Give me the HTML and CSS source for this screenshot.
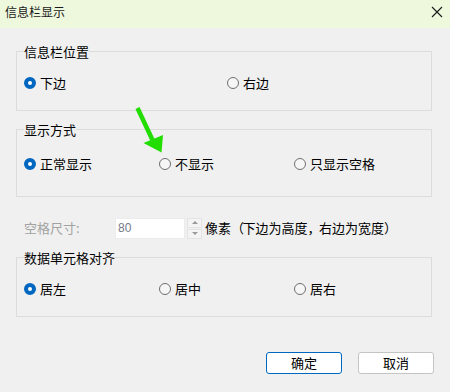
FILE: index.html
```html
<!DOCTYPE html>
<html lang="zh-CN">

<head>
  <meta charset="UTF-8">
  <title>信息栏显示</title>
  <link rel="stylesheet" href="styles.css">
</head>

<body>
  <div class="dialog">
    <div class="titlebar">
      <span class="title">信息栏显示</span>
      <svg class="close" width="12" height="12" viewBox="0 0 12 12">
        <path d="M1 1 L11 11 M11 1 L1 11" stroke="#1a1a1a" stroke-width="1.1" fill="none"/>
      </svg>
    </div>

    <div class="content">
      <!-- 信息栏位置 -->
      <div class="group group-pos">
        <div class="group-title">信息栏位置</div>
        <div class="options wide">
          <label class="radio"><span class="dot checked"></span>下边</label>
          <label class="radio"><span class="dot"></span>右边</label>
        </div>
      </div>

      <!-- 显示方式 -->
      <div class="group group-mode">
        <div class="group-title">显示方式</div>
        <div class="options">
          <label class="radio"><span class="dot checked"></span>正常显示</label>
          <label class="radio"><span class="dot"></span>不显示</label>
          <label class="radio"><span class="dot"></span>只显示空格</label>
        </div>
      </div>

      <div class="size-row">
        <span class="size-label">空格尺寸:</span>
        <div class="spin-input">80</div>
        <div class="spin-buttons">
          <span class="spin-btn"><span class="tri up"></span></span>
          <span class="spin-btn"><span class="tri down"></span></span>
        </div>
        <span class="size-note">像素<span class="paren">（</span>下边为高度<span class="paren">，</span>右边为宽度<span class="paren">）</span></span>
      </div>

      <!-- 数据单元格对齐 -->
      <div class="group group-align">
        <div class="group-title">数据单元格对齐</div>
        <div class="options">
          <label class="radio"><span class="dot checked"></span>居左</label>
          <label class="radio"><span class="dot"></span>居中</label>
          <label class="radio"><span class="dot"></span>居右</label>
        </div>
      </div>

      <div class="actions">
        <button class="btn primary">确定</button>
        <button class="btn">取消</button>
      </div>
    </div>

    <svg class="arrow" width="40" height="60" viewBox="130 100 40 60">
      <line x1="137.5" y1="108" x2="152.5" y2="140" stroke="#22dd00" stroke-width="4.5"/>
      <polygon points="143.5,143 163,135 161.5,152.5" fill="#22dd00"/>
    </svg>
  </div>
</body>

</html>
```

FILE: styles.css
```css
body {
  margin: 0;
  padding: 0;
  background-color: #f0f0f0;
  font-family: "Noto Sans CJK SC", "Noto Sans", sans-serif;
  font-size: 13px;
  line-height: 18px;
  color: #000;
}

.dialog {
  position: relative;
  width: 450px;
  height: 392px;
  background-color: #f0f0f0;
  overflow: hidden;
}

.titlebar {
  height: 28px;
  background-color: #eef8dd;
  display: flex;
  justify-content: space-between;
  align-items: flex-start;
  padding: 3px 7px 0 5px;
  box-sizing: border-box;
}

.title {
  font-size: 12px;
  line-height: 18px;
  color: #1a1a1a;
}

.close {
  margin-top: 3px;
}

.content {
  padding: 0 16px;
  display: flow-root;
}

.group {
  width: 416px;
  box-sizing: border-box;
  border: 1px solid #dcdcdc;
  padding: 0 7px;
}

.group-title {
  width: fit-content;
  height: 18px;
  margin-top: -9px;
  line-height: 18px;
  background-color: #f0f0f0;
}

.group-pos {
  margin-top: 23px;
  padding-bottom: 18px;
}

.group-mode {
  margin-top: 18px;
  padding-bottom: 23px;
}

.group-align {
  margin-top: 18px;
  padding-bottom: 18px;
}

.options {
  display: grid;
  grid-template-columns: 135px 135px 135px;
  margin-top: 13px;
}

.group-mode .options {
  margin-top: 16px;
}

.options.wide {
  grid-template-columns: 203px 203px;
}

.radio {
  display: flex;
  align-items: center;
  height: 18px;
  line-height: 18px;
  gap: 4px;
  white-space: nowrap;
}

.dot {
  width: 12px;
  height: 12px;
  box-sizing: border-box;
  border: 1px solid #6f6f6f;
  border-radius: 50%;
  background-color: #f6f6f6;
}

.dot.checked {
  border: 4px solid #0067c0;
  background-color: #fff;
}

.size-row {
  display: flex;
  align-items: center;
  margin-top: 20px;
  height: 22px;
}

.size-label {
  color: #a2a2a2;
  width: 91px;
  padding-left: 8px;
  line-height: 18px;
}

.spin-input {
  width: 70px;
  height: 21px;
  box-sizing: border-box;
  background-color: #fff;
  border: 1px solid #ececec;
  color: #74798a;
  font-family: "Liberation Sans", Arial, sans-serif;
  font-size: 12px;
  line-height: 19px;
  padding-left: 2px;
}

.spin-buttons {
  display: flex;
  flex-direction: column;
  gap: 1px;
  margin-left: 2px;
}

.spin-btn {
  width: 15px;
  height: 10px;
  box-sizing: border-box;
  background-color: #f4f4f4;
  border: 1px solid #e3e3e3;
  display: flex;
  align-items: center;
  justify-content: center;
}

.tri {
  width: 0;
  height: 0;
  border-left: 3px solid transparent;
  border-right: 3px solid transparent;
}

.tri.up {
  border-bottom: 3px solid #9a9a9a;
}

.tri.down {
  border-top: 3px solid #9a9a9a;
}

.size-note {
  margin-left: 3px;
  line-height: 18px;
  white-space: nowrap;
}

.size-note .paren {
  letter-spacing: -1.5px;
}

.actions {
  display: flex;
  justify-content: flex-end;
  gap: 16px;
  margin-top: 35px;
}

.btn {
  width: 76px;
  height: 22px;
  box-sizing: border-box;
  background-color: #fff;
  border: 1px solid #c4c4c4;
  border-radius: 3px;
  font-family: "Noto Sans CJK SC", sans-serif;
  font-size: 13px;
  line-height: 18px;
  color: #000;
  padding: 0;
}

.btn.primary {
  border-color: #0067c0;
}

.arrow {
  position: absolute;
  left: 130px;
  top: 100px;
}
```
